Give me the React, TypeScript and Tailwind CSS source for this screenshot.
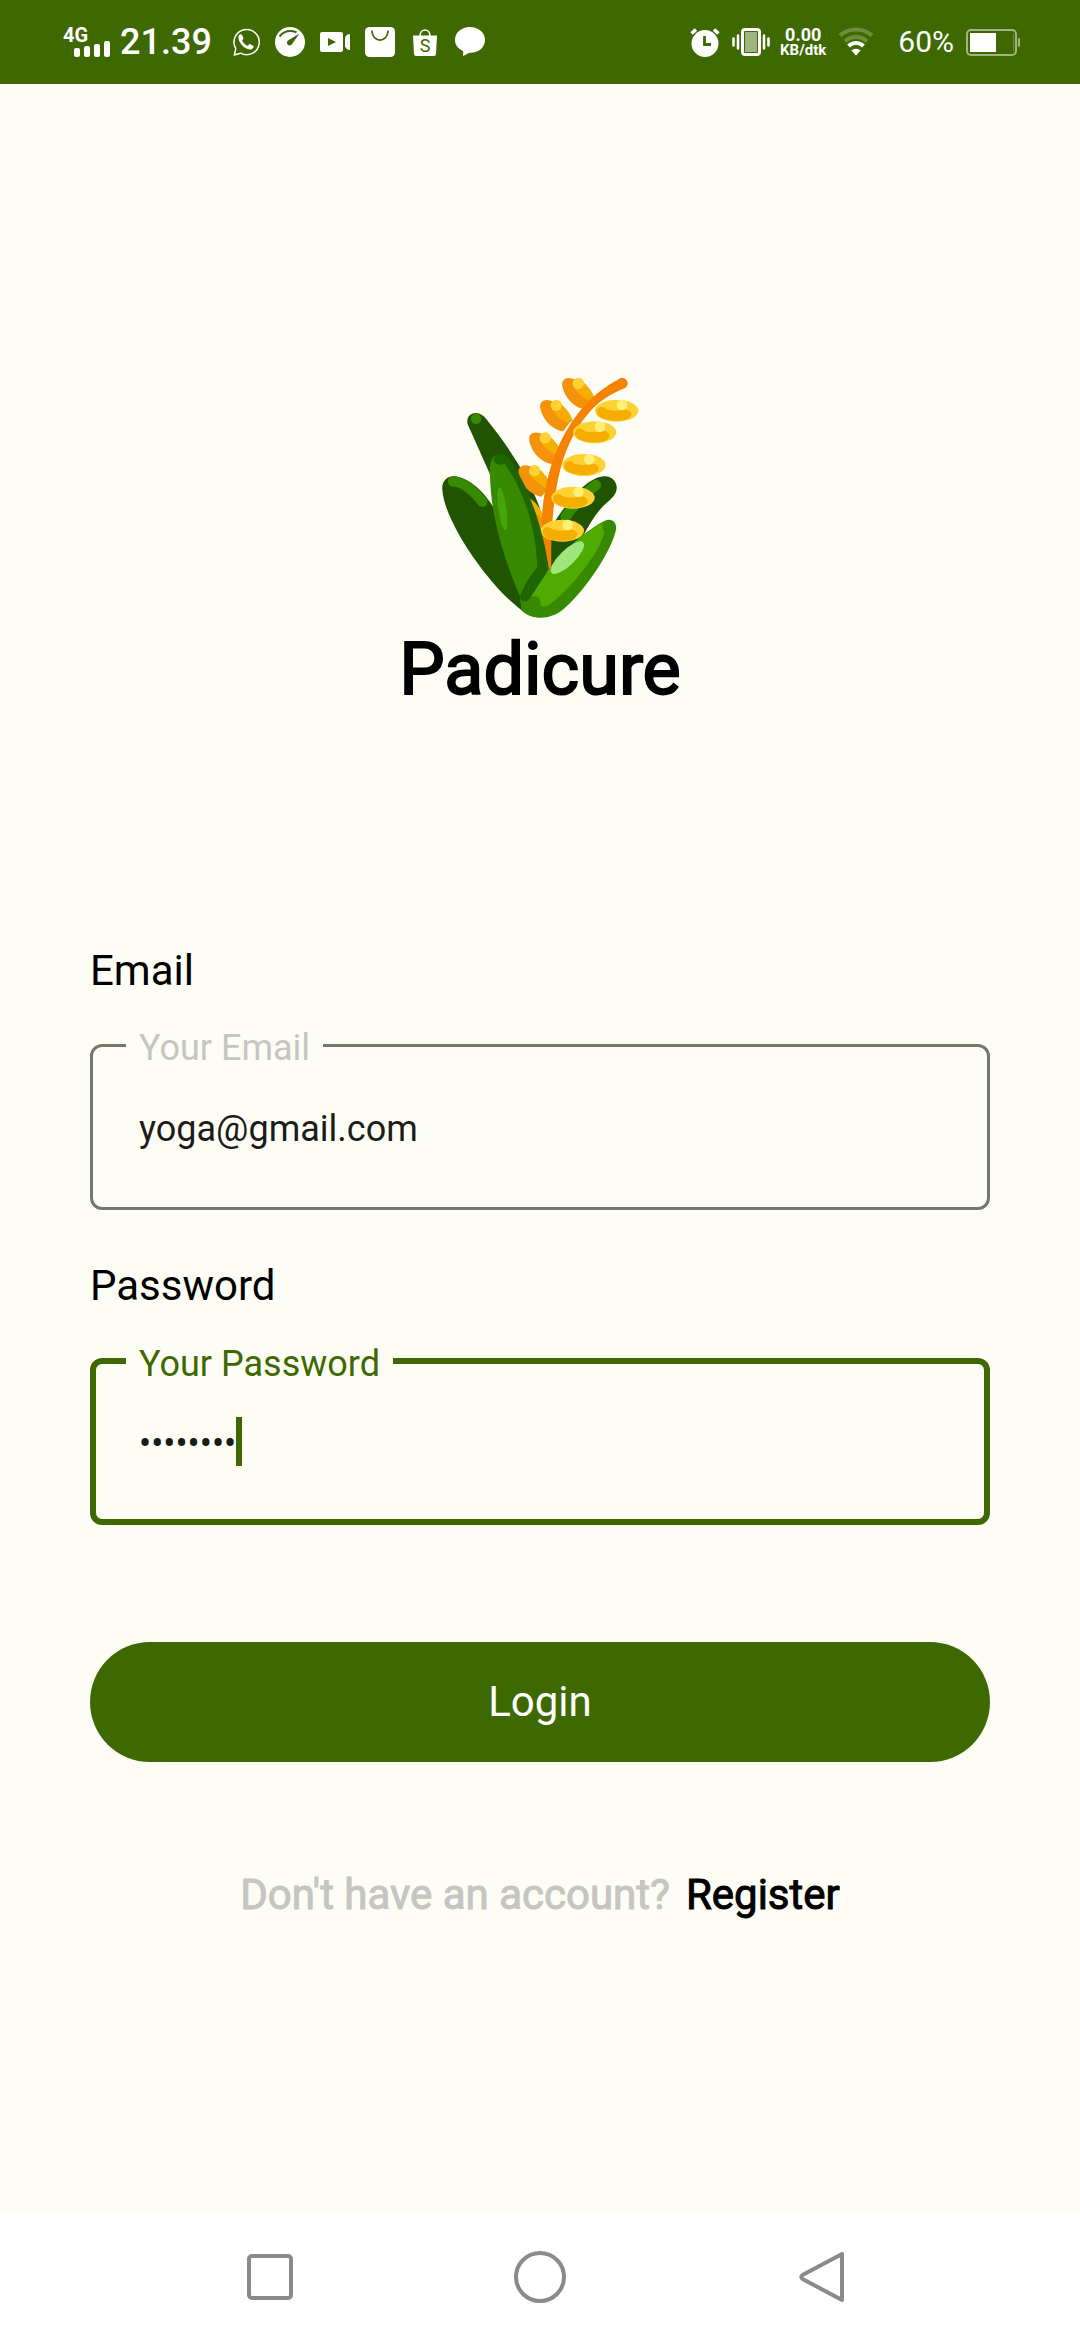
import { useState } from "react";
import type { ReactNode } from "react";

const LEFT_GRAINS = [
  [0, 0],
  [-66, 66],
  [-99, 164],
  [-131, 262],
];

const RIGHT_GRAINS = [
  [0, 0],
  [-66, 65],
  [-98, 163],
  [-131, 261],
  [-163, 360],
];

function PlantLogo() {
  return (
    <svg viewBox="0 0 720 804" className="h-[268px] w-[240px]" role="img" aria-label="Rice plant">
      <path fill="#215400" d="M67 390C64 365 80 348 104 349C150 353 195 400 222 444L320 705L342 771C250 738 74 500 67 390Z" />
      <path d="M99 364C130 364 160 392 187 425" fill="none" stroke="#378a00" strokeWidth="31" strokeLinecap="round" />
      <path fill="#215400" d="M143 193C138 170 153 158 169 159C180 160 190 166 197 175C270 265 330 360 358 440L385 600L300 620L208 338Z" />
      <circle cx="168" cy="176" r="16" fill="#378a00" />
      <path fill="#215400" d="M550 349C575 346 592 366 590 386C588 405 575 415 560 428C530 455 510 490 488 530L392 628L392 505C440 425 500 354 550 349Z" />
      <path d="M528 375C494 400 470 425 437 470" fill="none" stroke="#378a00" strokeWidth="31" strokeLinecap="round" />
      {LEFT_GRAINS.map(([x, y]) => (
        <g key={y} transform={`translate(${x} ${y})`}>
          <path fill="#f5920c" d="M427 78C423 58 440 49 459 56L480 62C502 76 518 96 522 112L496 148C460 144 432 108 427 78Z" />
          <path fill="#f5ad00" d="M459 72L490 66C506 82 518 98 524 116L511 124C488 112 468 96 459 78Z" />
          <circle cx="475" cy="70" r="17" fill="#ffd133" />
        </g>
      ))}
      <path fill="#f5ad00" d="M326 414C345 422 362 445 372 474L370 500L352 500Z" />
      <path fill="#f5920c" d="M338 450C350 462 358 470 370 476L374 580L350 520Z" />
      <path
        fill="#f58300"
        d="M598 56C530 92 485 140 452 191C400 270 371 370 365 480L372 580L388 634L394 634C391 480 405 380 429 300C452 228 490 168 537 128C565 107 590 94 615 84A16 16 0 0 0 598 56Z"
      />
      {RIGHT_GRAINS.map(([x, y]) => (
        <g key={y} transform={`translate(${x} ${y})`}>
          <ellipse cx="590" cy="152" rx="65" ry="33" fill="#ffd133" />
          <path fill="#f5ad00" d="M531 156C530 138 551 137 558 147C575 154 594 152 607 149C626 145 638 156 633 167C628 180 604 183 580 182C552 180 532 172 531 156Z" />
          <circle cx="606" cy="135" r="16" fill="#fff07a" />
        </g>
      ))}
      <path fill="#378a00" d="M387 630C430 565 520 498 558 481C580 474 593 492 587 514C568 590 478 710 430 748C390 782 335 780 305 752L300 715Z" />
      <path fill="#4fab00" d="M387 630C430 568 505 508 549 488C546 500 546 507 553 514C545 575 440 700 386 736C370 745 359 740 361 722C360 706 340 705 328 715Z" />
      <ellipse cx="442" cy="593" rx="66" ry="23" fill="#a0e57c" transform="rotate(-44 442 593)" />
      <path fill="#378a00" d="M210 345C206 300 220 281 241 282C310 330 350 500 356 622L306 722C260 620 212 480 210 345Z" />
      <path
        fill="#206600"
        d="M221 300C221 287 230 281 241 282C257 284 266 292 275 305C330 390 370 510 387 628C366 656 346 690 329 718C320 730 299 726 300 708C315 672 332 644 352 622C348 500 310 390 254 312C240 318 224 312 221 300Z"
      />
      <ellipse cx="247" cy="446" rx="12" ry="65" fill="#46a607" transform="rotate(-8 247 446)" />
      <path fill="#378a00" d="M300 720C306 728 320 728 328 716L350 715L362 745L320 762Z" />
    </svg>
  );
}

function StatusIcon({ children }: { children: ReactNode }) {
  return (
    <svg viewBox="0 0 30 30" className="size-[30px]" fill="#fff" aria-hidden="true">
      {children}
    </svg>
  );
}

function StatusBar() {
  return (
    <header className="flex h-[84px] items-center justify-between bg-[#3d6900] pr-[60px] pl-[63px] text-white">
      <div className="flex items-center">
        <div className="flex h-[30px] w-[47px] flex-col">
          <span className="text-[20px] leading-[16px] font-bold">4G</span>
          <svg viewBox="0 0 36 16" className="-mt-0.5 h-4 w-9 self-end" fill="#fff" aria-hidden="true">
            <rect x="0" y="7" width="6" height="9" rx="2" />
            <rect x="10" y="5" width="6" height="11" rx="2" />
            <rect x="20" y="3" width="6" height="13" rx="2" />
            <rect x="30" y="0" width="6" height="16" rx="2" />
          </svg>
        </div>
        <span className="ml-[10px] text-[36px] leading-[42px] font-medium">21.39</span>
        <div className="ml-[18px] flex gap-[15px]">
          <StatusIcon>
            <path d="M4.3 28L5.8 21.6A12.6 12.6 0 1 1 10.6 26.2Z" fill="none" stroke="#fff" strokeWidth="1.5" strokeLinejoin="round" />
            <path d="M8.6 8.6C9.4 7.2 11.2 6.6 12 7.8L13.4 11C13.7 12 12 13 12.2 13.8C13.4 16.2 15 17.6 17.3 18.7C18.3 19 19 17 20 17.1L23.2 18.8C24.4 19.8 22.8 22 21.2 22.4C14.5 23.5 7 14.5 8.6 8.6Z" />
          </StatusIcon>
          <StatusIcon>
            <circle cx="15" cy="15" r="15" />
            <path d="M4.5 9.5C9 4 15.5 3.2 21.5 5.2" fill="none" stroke="#3d6900" strokeWidth="2" />
            <path d="M24.5 6.5L17.4 16.6A2.8 2.8 0 1 1 13 13.5Z" fill="#3d6900" />
          </StatusIcon>
          <StatusIcon>
            <rect x="0" y="5" width="23" height="20" rx="2" />
            <path d="M25 10.5C26 8 28 7 30 7V23C28 23 26 22 25 19.5Z" />
            <path d="M8 11L16 15L8 19Z" fill="#3d6900" />
          </StatusIcon>
          <StatusIcon>
            <rect width="30" height="30" rx="4.5" />
            <path d="M7 4.5C8 16 22 16 23 4.5" fill="none" stroke="#3d6900" strokeWidth="1.8" strokeLinecap="round" />
          </StatusIcon>
          <StatusIcon>
            <path d="M3 8.5H27L26 27Q26 29 24 29H6Q4 29 4 27Z" />
            <path d="M10 9C10 1 20 1 20 9" fill="none" stroke="#fff" strokeWidth="1.6" />
            <text x="15" y="25" textAnchor="middle" fontSize="18" fill="#3d6900">
              S
            </text>
          </StatusIcon>
          <StatusIcon>
            <path d="M15 0C23.5 0 30 5.500 30 13C30 20.500 23.500 26 15 25.800C12.500 26 10.500 28.200 8 29C8 27 8.500 25.500 8 24C3 21.500 0 18 0 13C0 5.500 6.500 0 15 0Z" />
          </StatusIcon>
        </div>
      </div>
      <div className="flex items-center">
        <StatusIcon>
          <circle cx="15" cy="16.500" r="13.500" />
          <path d="M1.500 6.500L6 2.500M28.500 6.500L24 2.500" stroke="#fff" strokeWidth="3.500" />
          <path d="M14.500 9V17.500H21" fill="none" stroke="#3d6900" strokeWidth="2.800" />
        </StatusIcon>
        <svg viewBox="0 0 38 30" className="ml-3 h-[30px] w-[38px]" aria-hidden="true">
          <rect x="10.500" y="2.500" width="17" height="25" rx="2.500" fill="none" stroke="#fff" strokeWidth="3" />
          <rect x="13" y="5" width="12" height="20" fill="#9fb680" />
          <path d="M1.500 11.500V18.500M6 8.500V21.500M32 8.500V21.500M36.500 11.500V18.500" stroke="#fff" strokeWidth="2.600" strokeLinecap="round" />
        </svg>
        <div className="ml-[10px] flex flex-col items-center font-bold">
          <span className="text-[18px] leading-[16px]">0.00</span>
          <span className="text-[15px] leading-[14px]">KB/dtk</span>
        </div>
        <svg viewBox="0 0 36 30" className="ml-3 h-[30px] w-9" fill="none" strokeWidth="4" aria-hidden="true">
          <path d="M2 8.500C11 0.500 25 0.500 34 8.500" stroke="#6c8d3d" />
          <path d="M7 14.500C13 8.500 23 8.500 29 14.500" stroke="#6c8d3d" />
          <path d="M10.500 19C15 15 21 15 25.500 19" stroke="#fff" />
          <path d="M13.500 23.500C16 21 20 21 22.500 23.500L18 28.500Z" fill="#fff" />
        </svg>
        <span className="ml-6 text-[30px] leading-[36px]">60%</span>
        <svg viewBox="0 0 54 27" className="ml-3 h-[27px] w-[54px]" aria-hidden="true">
          <rect x="1" y="1" width="49" height="25" rx="4" fill="none" stroke="#9fb680" strokeWidth="2" />
          <path d="M47.500 5V22" stroke="#6c8d3d" />
          <rect x="4" y="4" width="26" height="19" fill="#fff" />
          <rect x="52" y="9" width="2" height="9" rx="1" fill="#9fb680" />
        </svg>
      </div>
    </header>
  );
}

function NavigationBar() {
  return (
    <nav className="grid h-[126px] grid-cols-3 items-center bg-white px-[135px]" aria-label="System">
      <button type="button" aria-label="Recent apps" className="flex justify-center">
        <svg viewBox="0 0 80 60" className="h-[60px] w-20" fill="none" stroke="#8a8a8a" strokeWidth="4">
          <rect x="19" y="9" width="42" height="42" rx="3" />
        </svg>
      </button>
      <button type="button" aria-label="Home" className="flex justify-center">
        <svg viewBox="0 0 80 60" className="h-[60px] w-20" fill="none" stroke="#8a8a8a" strokeWidth="4">
          <circle cx="40" cy="30" r="24" />
        </svg>
      </button>
      <button type="button" aria-label="Back" className="flex justify-center">
        <svg viewBox="0 0 80 60" className="h-[60px] w-20" fill="none" stroke="#8a8a8a" strokeWidth="4" strokeLinejoin="round">
          <path d="M72 7V53L32.500 32Q30 30 32.500 28Z" />
        </svg>
      </button>
    </nav>
  );
}

export default function App() {
  const [email, setEmail] = useState("yoga@gmail.com");
  const [password, setPassword] = useState("yoga1234");

  return (
    <div className="flex min-h-screen flex-col bg-[#fefdf5] font-['Roboto',sans-serif] text-black">
      <StatusBar />
      <main className="flex flex-1 flex-col px-[90px] pt-[276px]">
        <div className="flex flex-col items-center">
          <PlantLogo />
          <h1 className="text-[72px] leading-[84px] font-normal [-webkit-text-stroke:2px_#000]">Padicure</h1>
        </div>
        <form className="mt-[234px] flex flex-col" onSubmit={(e) => e.preventDefault()}>
          <label htmlFor="email" className="self-start text-[42px] leading-[50px]">
            Email
          </label>
          <fieldset className="mt-[25px] min-w-0 rounded-[12px] border-[3px] border-[#75796c] pt-[35px] pr-[46px] pb-[54px] pl-[33px]">
            <legend className="h-12 px-[13px] pt-[6px] text-[36px] leading-[42px] text-[#c5c6c0]">Your Email</legend>
            <input
              id="email"
              type="email"
              value={email}
              onChange={(e) => setEmail(e.target.value)}
              className="block h-[49px] w-full pl-[13px] text-[36px] text-[#1b1c18] outline-none"
            />
          </fieldset>
          <label htmlFor="password" className="mt-[51px] self-start text-[42px] leading-[50px]">
            Password
          </label>
          <fieldset className="mt-[26px] min-w-0 rounded-[12px] border-[6px] border-[#3d6900] pt-[32px] pr-[43px] pb-[53px] pl-[30px]">
            <legend className="h-12 px-[13px] pt-[6px] text-[36px] leading-[42px] text-[#3d6900]">Your Password</legend>
            <div className="flex h-[49px] pl-[13px]">
              <input
                id="password"
                type="password"
                value={password}
                onChange={(e) => setPassword(e.target.value)}
                className="h-full max-w-full pt-1 text-[36px] text-[#1b1c18] outline-none [field-sizing:content]"
              />
              <span className="w-[6px] shrink-0 bg-[#3d6900]" aria-hidden="true" />
            </div>
          </fieldset>
          <button type="submit" className="mt-[117px] h-[120px] rounded-full bg-[#3d6900] text-[42px] leading-[50px] text-white">
            Login
          </button>
        </form>
        <p className="mt-[108px] flex justify-center gap-4 text-[42px] leading-[50px]">
          <span className="text-[#c5c6c0] [-webkit-text-stroke:1px_#c5c6c0]">Don't have an account?</span>
          <a href="#register" className="[-webkit-text-stroke:1px_#000]">
            Register
          </a>
        </p>
      </main>
      <NavigationBar />
    </div>
  );
}
